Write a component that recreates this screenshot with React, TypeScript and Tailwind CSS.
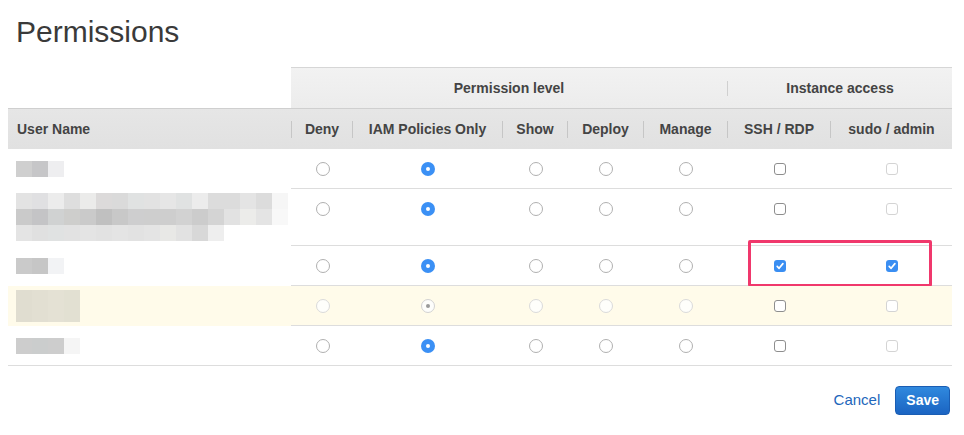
import React from "react";

const COLS = "grid grid-cols-[283px_61px_150px_65px_76px_84px_103px_122px]";

type Ctl =
  | { t: "r"; on?: boolean; dis?: boolean }
  | { t: "c"; on?: boolean; dis?: boolean };

function Radio({ on, dis }: { on?: boolean; dis?: boolean }) {
  if (on && !dis)
    return (
      <div className="w-[14px] h-[14px] rounded-full bg-[#3b90f5] flex items-center justify-center">
        <div className="w-[4px] h-[4px] rounded-full bg-white" />
      </div>
    );
  if (on && dis)
    return (
      <div className="w-[14px] h-[14px] rounded-full border border-[#d2d2d2] bg-[#fdfdfb] flex items-center justify-center">
        <div className="w-[4px] h-[4px] rounded-full bg-[#9a9a9a]" />
      </div>
    );
  return (
    <div
      className={
        dis
          ? "w-[14px] h-[14px] rounded-full border border-[#dadada] bg-[#fefefb]"
          : "w-[14px] h-[14px] rounded-full border border-[#b0b0b0] bg-white"
      }
    />
  );
}

function Check({ on, dis }: { on?: boolean; dis?: boolean }) {
  if (on)
    return (
      <div className="w-[12px] h-[12px] rounded-[3px] bg-[#3a8ef2] flex items-center justify-center">
        <svg width="12" height="12" viewBox="0 0 12 12">
          <path d="M3.2 6.4 L5.1 8.3 L8.9 3.6" fill="none" stroke="white" strokeWidth="1.7" strokeLinecap="round" strokeLinejoin="round" />
        </svg>
      </div>
    );
  return (
    <div
      className={
        dis
          ? "w-[12px] h-[12px] rounded-[3px] border border-[#d4d4d4] bg-white"
          : "w-[12px] h-[12px] rounded-[3px] border border-[#8e8e8e] bg-white"
      }
    />
  );
}

type Row = {
  pt: string;
  pb?: string;
  blocks: string[][];
  yellow?: boolean;
  ctl: Ctl[];
  highlight?: boolean;
  last?: boolean;
};

const normal = (dis = false): Ctl[] => [
  { t: "r", dis },
  { t: "r", on: true, dis },
  { t: "r", dis },
  { t: "r", dis },
  { t: "r", dis },
  { t: "c", dis: false },
  { t: "c", dis: true },
];

const rows: Row[] = [
  {
    pt: "pt-[12px]",
    blocks: [["#cfcfcf", "#c6c6c8", "#eeeef0"]],
    ctl: normal(),
  },
  {
    pt: "pt-[4px]",
    pb: "pb-[5px]",
    blocks: [
      ["#e3e3e3", "#e0e0e2", "#ececec", "#dedede", "#ebebea", "#dcdada", "#dadada", "#e0e2e2", "#e2e2e2", "#e6e6e6", "#e0e2e2", "#ececec", "#dcdcdc", "#dcdcdc", "#e4e4e4", "#dcdcdc", "#f6f6f6"],
      ["#cacaca", "#c4c4c6", "#d0d2d2", "#cececc", "#cacaca", "#c0c0c0", "#c8c8c8", "#cececf", "#cecece", "#cecece", "#d2d2d2", "#cccccc", "#d4d4d4", "#e2e2e2", "#ececea", "#e4e4e4", "#f8f8f8"],
      ["#e4e4e4", "#e0e0e0", "#e0e2e2", "#e2e2e2", "#e4e4e4", "#e2e2e2", "#e4e4e4", "#e2e2e2", "#e4e4e4", "#e8e8e6", "#e2e2e2", "#d8d8d8", "#eeeeee"],
    ],
    ctl: normal(),
  },
  {
    pt: "pt-[12px]",
    blocks: [["#cacaca", "#c6c6c6", "#f2f3f5"]],
    ctl: [
      { t: "r" },
      { t: "r", on: true },
      { t: "r" },
      { t: "r" },
      { t: "r" },
      { t: "c", on: true },
      { t: "c", on: true },
    ],
    highlight: true,
  },
  {
    pt: "pt-[4px]",
    blocks: [
      ["#e0ddd0", "#e2dfd2", "#e4e1d4", "#e2e0d2"],
      ["#e0ddd0", "#e2dfd2", "#e4e1d4", "#e2e0d2"],
    ],
    yellow: true,
    ctl: [
      { t: "r", dis: true },
      { t: "r", on: true, dis: true },
      { t: "r", dis: true },
      { t: "r", dis: true },
      { t: "r", dis: true },
      { t: "c" },
      { t: "c", dis: true },
    ],
  },
  {
    pt: "pt-[12px]",
    blocks: [["#cdcdcd", "#cbcdcd", "#cdcdcd", "#f5f5f5"]],
    ctl: normal(),
    last: true,
  },
];

const subHeads = ["Deny", "IAM Policies Only", "Show", "Deploy", "Manage", "SSH / RDP", "sudo / admin"];

export default function App() {
  return (
    <div className="w-[964px] h-[435px] bg-white font-['Liberation_Sans',Arial,sans-serif] text-[#444] overflow-hidden">
      <div className="pt-[14px] pl-[16px] h-[67px]">
        <h1 className="text-[30px] leading-[36px] text-[#3a3a3a] font-normal">Permissions</h1>
      </div>

      <div className="ml-[8px] w-[944px]">
        {/* header row 1 */}
        <div className={COLS + " h-[41px]"}>
          <div />
          <div className="col-span-5 border-t border-[#d6d6d6] bg-gradient-to-b from-[#f2f2f2] to-[#ececec] flex items-center justify-center text-[14px] font-bold">
            Permission level
          </div>
          <div className="col-span-2 border-t border-[#d6d6d6] bg-gradient-to-b from-[#f2f2f2] to-[#ececec] flex items-center">
            <div className="w-px h-[15px] bg-[#d0d0d0]" />
            <div className="flex-1 text-center text-[14px] font-bold">Instance access</div>
          </div>
        </div>

        {/* header row 2 */}
        <div className={COLS + " h-[41px] border-t border-[#cfcfcf] bg-gradient-to-b from-[#e6e6e6] to-[#e1e1e1]"}>
          <div className="flex items-center pl-[9px] text-[14px] font-bold">User Name</div>
          {subHeads.map((h) => (
            <div key={h} className="flex items-center">
              <div className="w-px h-[17px] bg-[#c6c6c6]" />
              <div className="flex-1 text-center text-[14px] font-bold whitespace-nowrap">{h}</div>
            </div>
          ))}
        </div>

        {/* body */}
        {rows.map((r, i) => (
          <div key={i} className={COLS + " relative " + (r.yellow ? "bg-[#fffbea]" : "bg-white")}>
            <div className={"pl-[8px] " + r.pt + " " + (r.pb ?? "") + (r.last ? " border-b border-[#dddddd]" : "")}>
              {r.blocks.map((line, j) => (
                <div key={j} className="flex">
                  {line.map((c, k) => (
                    <div key={k} className="w-[16px] h-[16px]" style={{ backgroundColor: c }} />
                  ))}
                </div>
              ))}
            </div>
            {r.ctl.map((c, k) => (
              <div key={k} className="border-b border-[#dddddd] flex justify-center items-start pl-[2px]">
                <div className="h-[39px] flex items-center">
                  {c.t === "r" ? <Radio on={c.on} dis={c.dis} /> : <Check on={c.on} dis={c.dis} />}
                </div>
              </div>
            ))}
            {r.highlight && (
              <div className="absolute left-[740px] top-[-6px] w-[184px] h-[47px] border-[3px] border-[#f0386c] rounded-[2px] pointer-events-none" />
            )}
          </div>
        ))}

        {/* footer */}
        <div className="flex justify-end items-center gap-[15px] pt-[20px] pr-[2px]">
          <span className="text-[15px] text-[#2266bb]">Cancel</span>
          <button className="h-[29px] px-[10px] rounded-[4px] bg-gradient-to-b from-[#3089de] to-[#1b64c2] border border-[#1a5db3] text-white text-[14px] font-bold">
            Save
          </button>
        </div>
      </div>
    </div>
  );
}
